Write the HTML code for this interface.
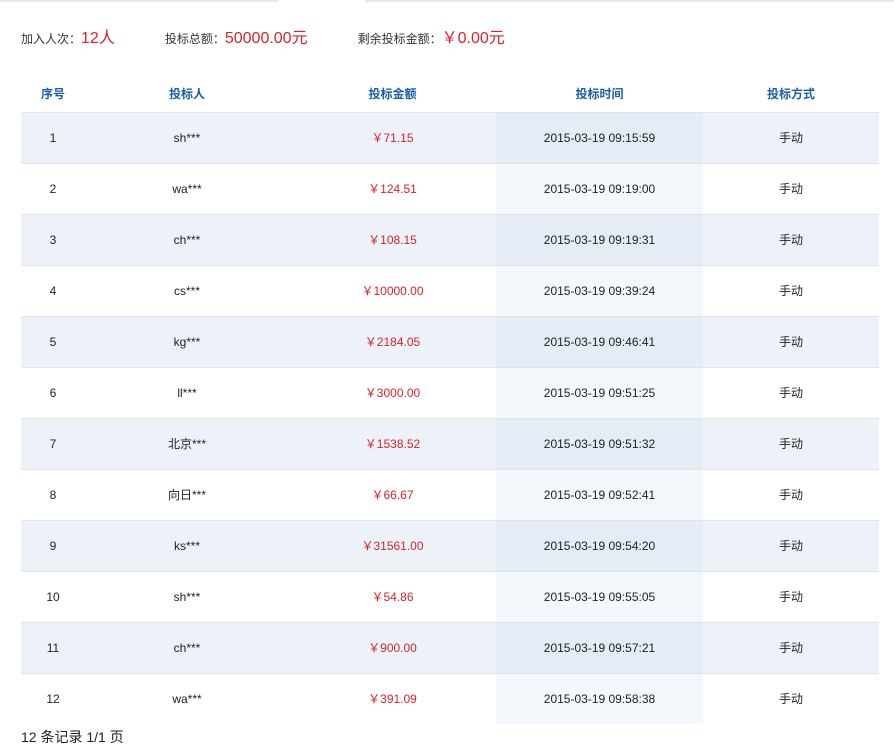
<!DOCTYPE html><html><head><meta charset="utf-8"><style>
body{margin:0;width:894px;height:750px;background:#fff;font-family:"Liberation Sans","Noto Sans CJK SC",sans-serif;font-size:12px;color:#333;position:relative;overflow:hidden}
.tl{position:absolute;top:0;height:2px;background:#e8e8e8}
.sum{position:absolute;top:29px;left:21px;font-size:12px;color:#333;white-space:nowrap;line-height:20px}
.sum span.r{color:#d9222a;font-size:16px}
table{position:absolute;left:21px;top:77px;border-collapse:collapse;width:858px;table-layout:fixed}
th{height:35px;line-height:35px;color:#1a5fa8;font-weight:bold;font-size:12px;border-bottom:1px solid #e0e4ea;padding:0}
td{height:50px;line-height:50px;text-align:center;border-bottom:1px solid #e0e4ea;padding:0;color:#222;white-space:nowrap;overflow:hidden}
tr.o td{background:#edf2f9}
tr.o td.t{background:#e4ecf6}
td.t{background:#f4f7fb}
td.a{color:#d9222a}
tr:last-child td{border-bottom:none}
.foot{position:absolute;left:21px;top:727px;font-size:14px;color:#222}
</style></head><body>
<div class="tl" style="left:0;width:278px"></div><div class="tl" style="left:365px;width:529px"></div>
<div class="sum">加入人次：<span class="r">12人</span><span style="display:inline-block;width:50px"></span>投标总额：<span class="r">50000.00元</span><span style="display:inline-block;width:50px"></span>剩余投标金额：<span class="r">￥0.00元</span></div>
<table>
<colgroup><col style="width:64px"><col style="width:204px"><col style="width:207px"><col style="width:207px"><col style="width:176px"></colgroup>
<tr><th>序号</th><th>投标人</th><th>投标金额</th><th>投标时间</th><th>投标方式</th></tr>
<tr class="o"><td>1</td><td>sh***</td><td class="a">￥71.15</td><td class="t">2015-03-19 09:15:59</td><td>手动</td></tr>
<tr><td>2</td><td>wa***</td><td class="a">￥124.51</td><td class="t">2015-03-19 09:19:00</td><td>手动</td></tr>
<tr class="o"><td>3</td><td>ch***</td><td class="a">￥108.15</td><td class="t">2015-03-19 09:19:31</td><td>手动</td></tr>
<tr><td>4</td><td>cs***</td><td class="a">￥10000.00</td><td class="t">2015-03-19 09:39:24</td><td>手动</td></tr>
<tr class="o"><td>5</td><td>kg***</td><td class="a">￥2184.05</td><td class="t">2015-03-19 09:46:41</td><td>手动</td></tr>
<tr><td>6</td><td>ll***</td><td class="a">￥3000.00</td><td class="t">2015-03-19 09:51:25</td><td>手动</td></tr>
<tr class="o"><td>7</td><td>北京***</td><td class="a">￥1538.52</td><td class="t">2015-03-19 09:51:32</td><td>手动</td></tr>
<tr><td>8</td><td>向日***</td><td class="a">￥66.67</td><td class="t">2015-03-19 09:52:41</td><td>手动</td></tr>
<tr class="o"><td>9</td><td>ks***</td><td class="a">￥31561.00</td><td class="t">2015-03-19 09:54:20</td><td>手动</td></tr>
<tr><td>10</td><td>sh***</td><td class="a">￥54.86</td><td class="t">2015-03-19 09:55:05</td><td>手动</td></tr>
<tr class="o"><td>11</td><td>ch***</td><td class="a">￥900.00</td><td class="t">2015-03-19 09:57:21</td><td>手动</td></tr>
<tr><td>12</td><td>wa***</td><td class="a">￥391.09</td><td class="t">2015-03-19 09:58:38</td><td>手动</td></tr>
</table>
<div class="foot">12 条记录 1/1 页</div>
</body></html>
